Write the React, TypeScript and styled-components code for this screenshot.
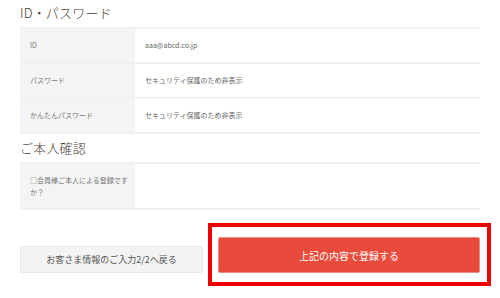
import React from "react";
import styled, { createGlobalStyle } from "styled-components";

const GlobalStyle = createGlobalStyle`
  html, body {
    margin: 0;
    padding: 0;
    background: #ffffff;
  }
  body {
    font-family: "Noto Sans CJK JP", "Noto Sans", sans-serif;
  }
`;

const Page = styled.div`
  width: 500px;
  height: 298px;
  padding: 0 20px;
  box-sizing: border-box;
  overflow: hidden;
`;

const SectionTitle = styled.h2<{ $top: number }>`
  margin: ${(p) => p.$top}px 0 4px;
  font-size: 13px;
  line-height: 20px;
  font-weight: 300;
  color: #4a3a31;
  letter-spacing: 0.2px;
`;

const Table = styled.div`
  border-bottom: 2px solid #f1f1f1;
`;

const Row = styled.div<{ $height: number }>`
  display: grid;
  grid-template-columns: 115px 1fr;
  min-height: ${(p) => p.$height}px;
  border-top: 2px solid #f1f1f1;
`;

const Label = styled.div`
  background: #f4f4f4;
  padding: 10px 5px 10px 10px;
  font-size: 7px;
  line-height: 12px;
  color: #777;
`;

const Value = styled.div`
  padding: 10px 10px;
  font-size: 7px;
  line-height: 12px;
  color: #666;
`;

const ButtonRow = styled.div`
  display: flex;
  align-items: flex-end;
  gap: 15px;
  margin-top: 27px;
`;

const BackButton = styled.button`
  width: 183px;
  height: 27px;
  background: #f3f3f3;
  border: 1px solid #e8e8e8;
  border-radius: 2px;
  font-family: "Noto Sans CJK JP", sans-serif;
  font-size: 9px;
  color: #555;
  padding: 0;
`;

const SubmitWrap = styled.div`
  position: relative;
  flex: 1;
`;

const SubmitButton = styled.button`
  display: block;
  width: 100%;
  height: 36px;
  background: #e84b3b;
  border: 1px solid #f08a80;
  border-radius: 2px;
  font-family: "Noto Sans CJK JP", sans-serif;
  font-size: 10px;
  color: #fff;
  padding: 0;
`;

const Highlight = styled.span`
  position: absolute;
  top: -14px;
  left: -10px;
  right: -11px;
  bottom: -13px;
  border: 4px solid #ee0000;
  pointer-events: none;
`;

const accountRows = [
  { label: "ID", value: "aaa@abcd.co.jp" },
  { label: "パスワード", value: "セキュリティ保護のため非表示" },
  { label: "かんたんパスワード", value: "セキュリティ保護のため非表示" },
];

export default function App() {
  return (
    <>
      <GlobalStyle />
      <Page>
        <SectionTitle $top={3}>ID・パスワード</SectionTitle>
        <Table>
          {accountRows.map((r) => (
            <Row key={r.label} $height={33}>
              <Label>{r.label}</Label>
              <Value>{r.value}</Value>
            </Row>
          ))}
        </Table>

        <SectionTitle $top={4}>ご本人確認</SectionTitle>
        <Table>
          <Row $height={42}>
            <Label>□会員様ご本人による登録ですか？</Label>
            <Value />
          </Row>
        </Table>

        <ButtonRow>
          <BackButton>お客さま情報のご入力2/2へ戻る</BackButton>
          <SubmitWrap>
            <SubmitButton>上記の内容で登録する</SubmitButton>
            <Highlight />
          </SubmitWrap>
        </ButtonRow>
      </Page>
    </>
  );
}
